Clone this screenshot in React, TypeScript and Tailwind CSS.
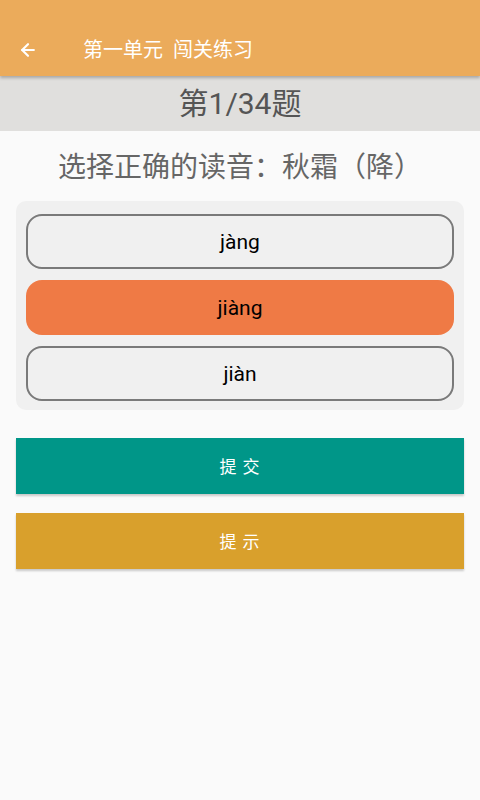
import { ArrowLeft } from "lucide-react"

const OPTIONS = [
  { key: "a", label: "jàng", selected: false },
  { key: "b", label: "jiàng", selected: true },
  { key: "c", label: "jiàn", selected: false },
]

export default function App() {
  return (
    <div className="flex flex-col w-[480px] h-[800px] bg-[#fafafa] font-['Roboto','Noto_Sans_CJK_SC',sans-serif]">
      {/* Toolbar */}
      <header className="relative z-10 flex items-center h-[76px] pt-[24px] bg-[#ebab5b] shadow-[0_2px_3px_rgba(0,0,0,0.25)]">
        <button className="flex items-center justify-center w-[56px] h-[52px] text-white">
          <ArrowLeft className="w-[20px] h-[20px]" strokeWidth={2.6} />
        </button>
        <h1 className="ml-[27px] text-[20px] text-white">第一单元&nbsp;&nbsp;闯关练习</h1>
      </header>

      {/* Progress */}
      <div className="flex items-center justify-center h-[55px] bg-[#e0dfdd]">
        <span className="text-[30px] text-[#555555]">第1/34题</span>
      </div>

      <main className="flex flex-col px-4">
        <p className="mt-[18px] text-center text-[28px] leading-[38px] text-[#666666]">选择正确的读音：秋霜（降）</p>

        <div className="mt-[14px] flex flex-col gap-[11px] rounded-[10px] bg-[#f0f0f0] px-[10px] pt-[13px] pb-[9px]">
          {OPTIONS.map((o) =>
            o.selected ? (
              <button
                key={o.key}
                className="h-[55px] pt-[3px] rounded-[16px] bg-[#ef7a45] text-[21px] text-black"
              >
                {o.label}
              </button>
            ) : (
              <button
                key={o.key}
                className="h-[55px] pt-[3px] rounded-[16px] border-2 border-[#7a7a7a] bg-[#f0f0f0] text-[21px] text-black"
              >
                {o.label}
              </button>
            )
          )}
        </div>

        <button className="mt-[28px] h-[56px] pt-[3px] bg-[#009688] text-[17px] tracking-[1px] text-white shadow-[0_2px_2px_rgba(0,0,0,0.2)]">
          提 交
        </button>
        <button className="mt-[19px] h-[56px] pt-[3px] bg-[#d9a02c] text-[17px] tracking-[1px] text-white shadow-[0_2px_2px_rgba(0,0,0,0.2)]">
          提 示
        </button>
      </main>
    </div>
  )
}
